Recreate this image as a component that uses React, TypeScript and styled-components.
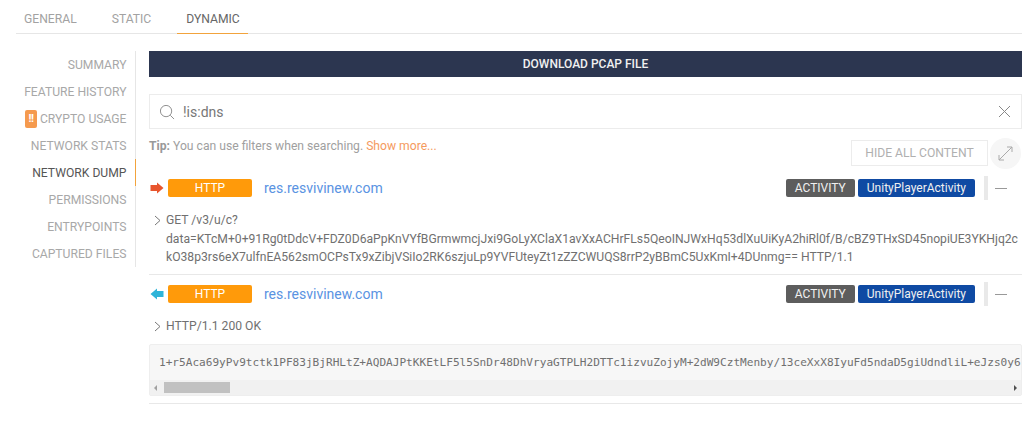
import React from "react";
import styled, { createGlobalStyle } from "styled-components";

const Global = createGlobalStyle`
  html, body { margin: 0; padding: 0; background: #fff; }
  body { font-family: Roboto, "Liberation Sans", sans-serif; color: #666; }
  * { box-sizing: border-box; }
`;

const Page = styled.div`
  width: 1024px;
  height: 429px;
  padding: 0 2px 0 16px;
  overflow: hidden;
`;
const Tabs = styled.div`
  display: flex;
  height: 34px;
  padding-left: 8px;
  gap: 35px;
  border-bottom: 1px solid #e6e6e6;
`;
const Tab = styled.div<{ $active?: boolean }>`
  height: 34px;
  line-height: 38px;
  font-size: 12.15px;
  margin: ${(p) => (p.$active ? "0 -8px 0 -9px" : "0")};
  padding: ${(p) => (p.$active ? "0 8px 0 9px" : "0")};
  border-bottom: 1px solid ${(p) => (p.$active ? "#f2a33c" : "transparent")};
  color: ${(p) => (p.$active ? "#666" : "#a2a2a2")};
`;
const Body = styled.div`
  display: flex;
  margin-top: 17px;
  align-items: flex-start;
`;
const Side = styled.div`
  width: 120px;
  flex: none;
  border-right: 1px solid #e6e6e6;
  margin-right: 13px;
`;
const SideItem = styled.div<{ $active?: boolean }>`
  height: 27px;
  margin-right: -1px;
  display: flex;
  justify-content: flex-end;
  align-items: center;
  gap: 3px;
  padding-right: 8.5px;
  font-size: 12.15px;
  border-right: 1px solid ${(p) => (p.$active ? "#f2a33c" : "transparent")};
  color: ${(p) => (p.$active ? "#555" : "#a8a8a8")};
`;
const Bang = styled.span`
  width: 12px;
  height: 18px;
  border-radius: 2px;
  background: #f59a4e;
  color: #fff;
  font-size: 11px;
  font-weight: 700;
  line-height: 18px;
  text-align: center;
  letter-spacing: -0.5px;
`;
const Main = styled.div`
  width: 873px;
  flex: none;
`;
const Download = styled.div`
  height: 26px;
  background: #2c3650;
  color: #f1f1f1;
  font-size: 12px;
  font-weight: 500;
  line-height: 26px;
  text-align: center;
`;
const Search = styled.div`
  height: 35px;
  margin-top: 17px;
  border: 1px solid #ececec;
  display: flex;
  align-items: center;
  padding: 0 10px 0 9px;
  color: #777;
  font-size: 14px;
`;
const SearchText = styled.span`
  flex: 1;
  margin-left: 8px;
`;
const TipRow = styled.div`
  display: flex;
  justify-content: space-between;
  align-items: flex-start;
  height: 38px;
  margin-top: 9px;
`;
const Tip = styled.div`
  font-size: 12.15px;
  line-height: 16px;
  color: #a0a0a0;
  b { font-weight: 700; color: #999; }
  span { color: #f59a5e; }
`;
const TipActions = styled.div`
  display: flex;
  margin-right: 1px;
`;
const HideBtn = styled.div`
  width: 137px;
  height: 26px;
  margin-top: 2px;
  border: 1px solid #ececec;
  color: #b0b0b0;
  font-size: 12.15px;
  line-height: 24px;
  text-align: center;
`;
const ExpandBtn = styled.div`
  width: 31px;
  height: 31px;
  border-radius: 50%;
  background: #f6f6f6;
  display: flex;
  align-items: center;
  justify-content: center;
  margin-left: 2px;
`;
const Entry = styled.div`
  border-bottom: 1px solid #e8e8e8;
  padding-bottom: 7px;
  margin-bottom: 7px;
`;
const Head = styled.div`
  display: flex;
  align-items: center;
  height: 24px;
`;
const Arrow = styled.svg`
  width: 14px;
  height: 12px;
  margin-left: 1px;
  flex: none;
`;
const Proto = styled.div`
  width: 84px;
  height: 18px;
  margin-left: 4px;
  background: #ff9a0a;
  border-radius: 2px;
  color: #fff;
  font-size: 12px;
  line-height: 18px;
  text-align: center;
`;
const Host = styled.a`
  margin-left: 12px;
  flex: 1;
  color: #5a93e2;
  font-size: 14px;
`;
const Tag = styled.div<{ $blue?: boolean }>`
  height: 18px;
  margin-left: 3px;
  padding: 0 9px;
  border-radius: 2px;
  background: ${(p) => (p.$blue ? "#0f4aa3" : "#5d5d5d")};
  color: #f0f0f0;
  font-size: 12px;
  line-height: 18px;
`;
const Minus = styled.div`
  width: 38px;
  height: 24px;
  margin-left: 9px;
  flex: none;
  border-left: 4px solid #e9e9e9;
  position: relative;
  &::after {
    content: "";
    position: absolute;
    left: 7px;
    top: 12px;
    width: 12px;
    height: 1px;
    background: #999;
  }
`;
const Detail = styled.div`
  margin-top: 11px;
  padding-left: 17px;
  position: relative;
  font-size: 12.15px;
  line-height: 18.5px;
  color: #707070;
  white-space: pre;
  overflow: hidden;
`;
const Chevron = styled.svg`
  position: absolute;
  left: 5px;
  top: 4px;
  width: 7px;
  height: 11px;
`;
const Code = styled.div`
  height: 52px;
  margin-top: 9px;
  background: #f7f7f7;
  border: 1px solid #eee;
  border-radius: 2px;
  overflow: hidden;
`;
const CodeText = styled.div`
  height: 35px;
  padding: 8px 0 0 9px;
  font-family: "DejaVu Sans Mono", "Liberation Mono", monospace;
  font-size: 11.1px;
  line-height: 19px;
  color: #707070;
  white-space: pre;
  overflow: hidden;
`;
const Scroll = styled.div`
  height: 15px;
  background: #f1f1f1;
  display: flex;
  align-items: center;
  justify-content: space-between;
  padding: 0 4px;
`;
const Thumb = styled.div`
  width: 66px;
  height: 11px;
  background: #c1c1c1;
  margin-left: 7px;
  margin-right: auto;
`;
const ScrollArrow = styled.div<{ $dir: "l" | "r" }>`
  width: 0;
  height: 0;
  border-top: 3px solid transparent;
  border-bottom: 3px solid transparent;
  ${(p) =>
    p.$dir === "l" ? "border-right: 3px solid #a0a0a0;" : "border-left: 3px solid #505050;"}
`;

const sideItems = ["SUMMARY", "FEATURE HISTORY", "CRYPTO USAGE", "NETWORK STATS", "NETWORK DUMP", "PERMISSIONS", "ENTRYPOINTS", "CAPTURED FILES"];

const Tags = () => (
  <>
    <Tag>ACTIVITY</Tag>
    <Tag $blue>UnityPlayerActivity</Tag>
    <Minus />
  </>
);

const Right = () => (
  <Arrow viewBox="0 0 14 12">
    <path d="M0.5 3h6.5V0.5L13.5 6 7 11.5V9H0.5z" fill="#e8552d" />
  </Arrow>
);
const Left = () => (
  <Arrow viewBox="0 0 14 12">
    <path d="M13.5 3H7V0.5L0.5 6 7 11.5V9h6.5z" fill="#2fb4d8" />
  </Arrow>
);
const Chev = () => (
  <Chevron viewBox="0 0 7 11">
    <path d="M1 1l5 4.5L1 10" fill="none" stroke="#777" strokeWidth="1" />
  </Chevron>
);

export default function App() {
  return (
    <Page>
      <Global />
      <Tabs>
        <Tab>GENERAL</Tab>
        <Tab>STATIC</Tab>
        <Tab $active>DYNAMIC</Tab>
      </Tabs>
      <Body>
        <Side>
          {sideItems.map((s) => (
            <SideItem key={s} $active={s === "NETWORK DUMP"}>
              {s === "CRYPTO USAGE" && <Bang>!!</Bang>}
              {s}
            </SideItem>
          ))}
        </Side>
        <Main>
          <Download>DOWNLOAD PCAP FILE</Download>
          <Search>
            <svg width="16" height="16" viewBox="0 0 17 17" fill="none" stroke="#8a8a8a" strokeWidth="1">
              <circle cx="7.5" cy="7.5" r="6" />
              <path d="M12 12l4 4" />
            </svg>
            <SearchText>!is:dns</SearchText>
            <svg width="13" height="13" viewBox="0 0 13 13" stroke="#888" strokeWidth="1">
              <path d="M1 1l11 11M12 1L1 12" />
            </svg>
          </Search>
          <TipRow>
            <Tip>
              <b>Tip:</b> You can use filters when searching. <span>Show more...</span>
            </Tip>
            <TipActions>
              <HideBtn>HIDE ALL CONTENT</HideBtn>
              <ExpandBtn>
                <svg width="15" height="15" viewBox="0 0 15 15" fill="none" stroke="#aaa" strokeWidth="1">
                  <path d="M1 14L14 1M9 1h5v5M1 9v5h5" />
                </svg>
              </ExpandBtn>
            </TipActions>
          </TipRow>
          <Entry>
            <Head>
              <Right />
              <Proto>HTTP</Proto>
              <Host>res.resvivinew.com</Host>
              <Tags />
            </Head>
            <Detail>
              <Chev />
              {"GET /v3/u/c?\ndata=KTcM+0+91Rg0tDdcV+FDZ0D6aPpKnVYfBGrmwmcjJxi9GoLyXClaX1avXxACHrFLs5QeoINJWxHq53dlXuUiKyA2hiRl0f/B/cBZ9THxSD45nopiUE3YKHjq2c\nkO38p3rs6eX7ulfnEA562smOCPsTx9xZibjVSiIo2RK6szjuLp9YVFUteyZt1zZZCWUQS8rrP2yBBmC5UxKmI+4DUnmg== HTTP/1.1"}
            </Detail>
          </Entry>
          <Entry>
            <Head>
              <Left />
              <Proto>HTTP</Proto>
              <Host>res.resvivinew.com</Host>
              <Tags />
            </Head>
            <Detail>
              <Chev />
              HTTP/1.1 200 OK
            </Detail>
            <Code>
              <CodeText>1+r5Aca69yPv9tctk1PF83jBjRHLtZ+AQDAJPtKKEtLF5l5SnDr48DhVryaGTPLH2DTTc1izvuZojyM+2dW9CztMenby/13ceXxX8IyuFd5ndaD5giUdndliL+eJzs0y6</CodeText>
              <Scroll>
                <ScrollArrow $dir="l" />
                <Thumb />
                <ScrollArrow $dir="r" />
              </Scroll>
            </Code>
          </Entry>
        </Main>
      </Body>
    </Page>
  );
}
